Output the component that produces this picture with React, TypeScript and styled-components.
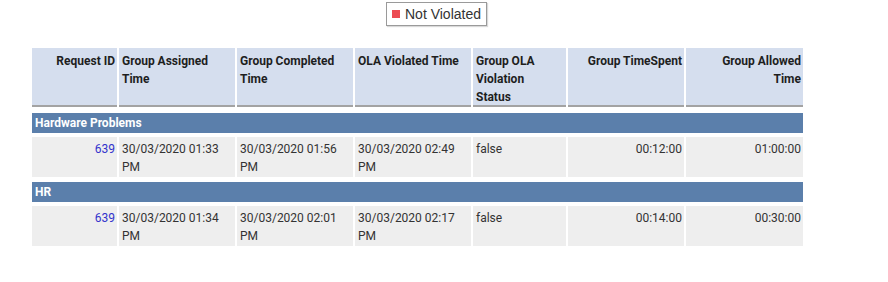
import React from "react";
import styled, { createGlobalStyle } from "styled-components";

const GlobalStyle = createGlobalStyle`
  html, body { margin: 0; padding: 0; background: #ffffff; }
  body { font-family: Roboto, "Liberation Sans", Arial, sans-serif; }
`;

const Page = styled.div`
  width: 888px;
  height: 282px;
  padding: 2px 0 0 32px;
  box-sizing: border-box;
  display: flex;
  flex-direction: column;
`;

const LegendWrap = styled.div`
  width: 771px;
  display: flex;
  justify-content: center;
  padding-left: 38px;
  box-sizing: border-box;
`;

const Legend = styled.div`
  display: flex;
  align-items: center;
  gap: 5px;
  height: 24px;
  box-sizing: border-box;
  padding: 0 5px 0 5px;
  border: 1px solid #9a9a9a;
  box-shadow: 1px 1px 1px rgba(0, 0, 0, 0.15);
  font-family: "Liberation Sans", Arial, sans-serif;
  font-size: 14px;
  color: #333333;
`;

const Swatch = styled.span<{ $color: string }>`
  width: 8px;
  height: 8px;
  background: ${(p) => p.$color};
  display: inline-block;
`;

const Table = styled.div`
  margin-top: 22px;
  width: 771px;
  display: flex;
  flex-direction: column;
`;

const cols = "85px 116px 116px 116px 93px 116px 117px";

const HeaderRow = styled.div`
  display: grid;
  grid-template-columns: ${cols};
  column-gap: 2px;
  margin-bottom: 1px;
`;

const HeaderCell = styled.div<{ $right?: boolean }>`
  background: #d5deee;
  border-bottom: 2px solid #a3a3a3;
  padding: 4px 2px 0 3px;
  height: 53px;
  line-height: 18px;
  font-size: 12px;
  font-weight: 700;
  color: #1e1e1e;
  text-align: ${(p) => (p.$right ? "right" : "left")};
`;

const HeaderLine = styled.div`
  white-space: nowrap;
`;

const GroupRow = styled.div`
  margin-top: 5px;
  height: 20px;
  line-height: 20px;
  padding: 0 3px;
  background: #5b7fab;
  color: #ffffff;
  font-size: 12px;
  font-weight: 700;
`;

const DataRow = styled.div`
  margin-top: 4px;
  display: grid;
  grid-template-columns: ${cols};
  column-gap: 2px;
`;

const DataCell = styled.div<{ $right?: boolean }>`
  background: #eeeeee;
  height: 40px;
  box-sizing: border-box;
  padding: 4px 2px 0 3px;
  line-height: 17.5px;
  font-size: 12px;
  color: #333333;
  text-align: ${(p) => (p.$right ? "right" : "left")};
`;

const IdLink = styled.a`
  color: #3333cc;
  text-decoration: none;
`;

const headers: { lines: string[]; right?: boolean }[] = [
  { lines: ["Request ID"], right: true },
  { lines: ["Group Assigned", "Time"] },
  { lines: ["Group Completed", "Time"] },
  { lines: ["OLA Violated Time"] },
  { lines: ["Group OLA", "Violation", "Status"] },
  { lines: ["Group TimeSpent"], right: true },
  { lines: ["Group Allowed", "Time"], right: true },
];

const groups = [
  {
    name: "Hardware Problems",
    rows: [
      {
        id: "639",
        assigned: "30/03/2020 01:33 PM",
        completed: "30/03/2020 01:56 PM",
        violated: "30/03/2020 02:49 PM",
        status: "false",
        spent: "00:12:00",
        allowed: "01:00:00",
      },
    ],
  },
  {
    name: "HR",
    rows: [
      {
        id: "639",
        assigned: "30/03/2020 01:34 PM",
        completed: "30/03/2020 02:01 PM",
        violated: "30/03/2020 02:17 PM",
        status: "false",
        spent: "00:14:00",
        allowed: "00:30:00",
      },
    ],
  },
];

export default function App() {
  return (
    <>
      <GlobalStyle />
      <Page>
        <LegendWrap>
          <Legend>
            <Swatch $color="#ec4b53" />
            <span>Not Violated</span>
          </Legend>
        </LegendWrap>
        <Table>
          <HeaderRow>
            {headers.map((h) => (
              <HeaderCell key={h.lines.join(" ")} $right={h.right}>
                {h.lines.map((l) => (
                  <HeaderLine key={l}>{l}</HeaderLine>
                ))}
              </HeaderCell>
            ))}
          </HeaderRow>
          {groups.map((g) => (
            <React.Fragment key={g.name}>
              <GroupRow>{g.name}</GroupRow>
              {g.rows.map((r, i) => (
                <DataRow key={i}>
                  <DataCell $right>
                    <IdLink href="#">{r.id}</IdLink>
                  </DataCell>
                  <DataCell>{r.assigned}</DataCell>
                  <DataCell>{r.completed}</DataCell>
                  <DataCell>{r.violated}</DataCell>
                  <DataCell>{r.status}</DataCell>
                  <DataCell $right>{r.spent}</DataCell>
                  <DataCell $right>{r.allowed}</DataCell>
                </DataRow>
              ))}
            </React.Fragment>
          ))}
        </Table>
      </Page>
    </>
  );
}
